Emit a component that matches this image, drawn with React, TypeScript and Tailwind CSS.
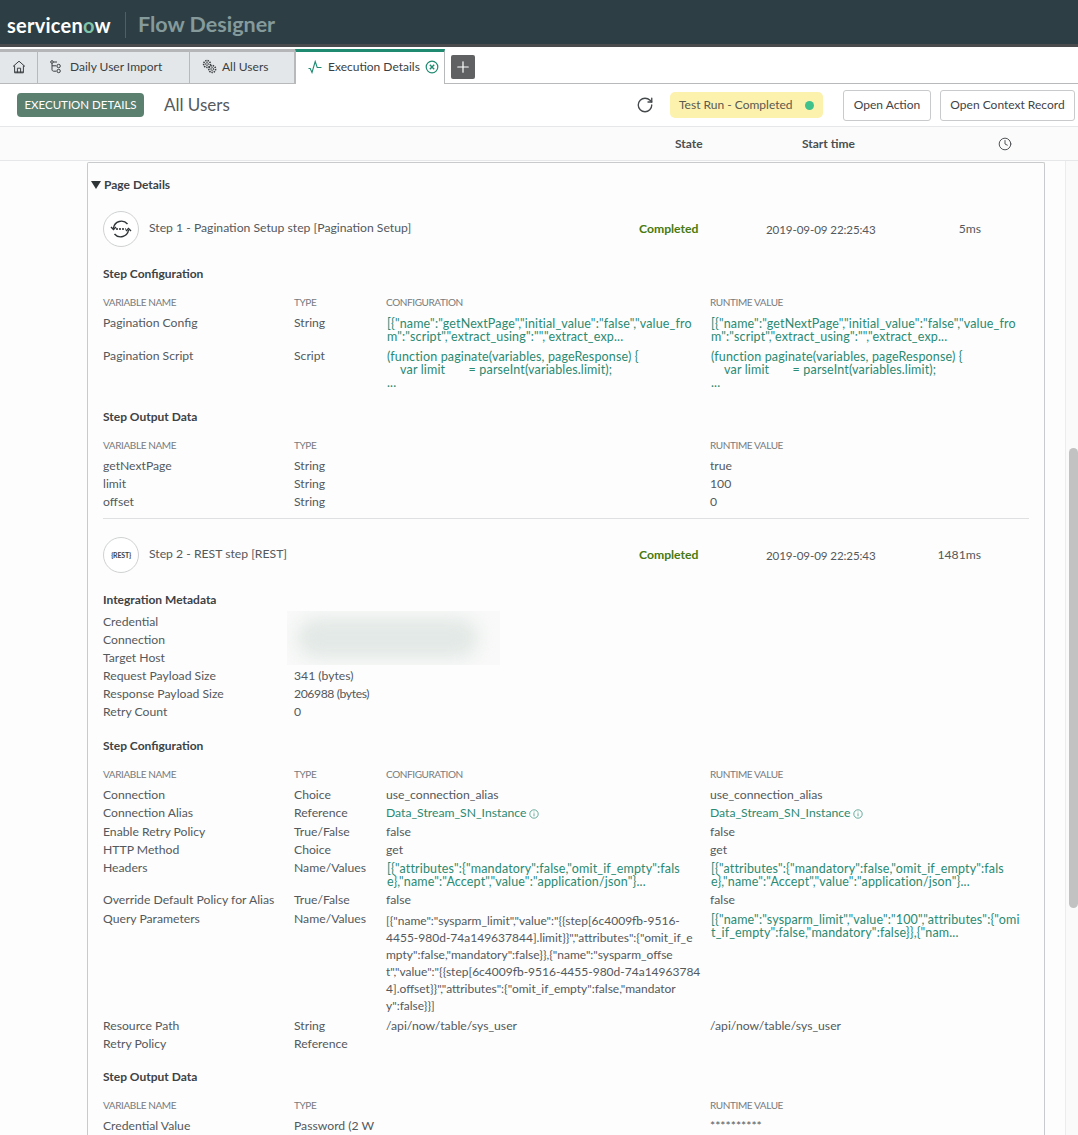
import { FC, ReactNode } from "react";
import { Clock, Plus, RotateCw } from "lucide-react";

const font = "font-['Lato','Noto_Sans',sans-serif]";

const configJson = `[{"name":"getNextPage","initial_value":"false","value_fro\nm":"script","extract_using":"","extract_exp...`;
const scriptText = `(function paginate(variables, pageResponse) {\n    var limit       = parseInt(variables.limit);\n...`;
const headersJson = `[{"attributes":{"mandatory":false,"omit_if_empty":fals\ne},"name":"Accept","value":"application/json"}...`;
const queryConfig = `[{"name":"sysparm_limit","value":"{{step[6c4009fb-9516-\n4455-980d-74a149637844].limit}}","attributes":{"omit_if_e\nmpty":false,"mandatory":false}},{"name":"sysparm_offse\nt","value":"{{step[6c4009fb-9516-4455-980d-74a14963784\n4].offset}}","attributes":{"omit_if_empty":false,"mandator\ny":false}}]`;
const queryRuntime = `[{"name":"sysparm_limit","value":"100","attributes":{"omi\nt_if_empty":false,"mandatory":false}},{"nam...`;

const Cols: FC<{ children: ReactNode; className?: string }> = ({ children, className }) => (
  <div className={`grid grid-cols-[191px_92px_324px_1fr] ${className ?? ""}`}>{children}</div>
);

const Heading: FC<{ children: ReactNode; className: string }> = ({ children, className }) => (
  <div className={`text-[12px] leading-[18px] font-bold text-[#3d4245] ${className}`}>{children}</div>
);

const HeadRow: FC<{ config?: boolean }> = ({ config }) => (
  <Cols className="mt-[10px] text-[10px] leading-[18px] tracking-[-0.4px] text-[#777b7e]">
    <div>VARIABLE NAME</div>
    <div>TYPE</div>
    <div>{config ? "CONFIGURATION" : ""}</div>
    <div>RUNTIME VALUE</div>
  </Cols>
);

const Row: FC<{ name: string; type?: ReactNode; config?: ReactNode; runtime?: ReactNode; className?: string }> = ({
  name,
  type,
  config,
  runtime,
  className,
}) => (
  <Cols className={`text-[12.2px] leading-[18px] text-[#54595c] ${className ?? ""}`}>
    <div>{name}</div>
    <div className="whitespace-pre">{type}</div>
    <div>{config}</div>
    <div>{runtime}</div>
  </Cols>
);

const Green: FC<{ text: string; pb?: string }> = ({ text, pb }) => (
  <div className={`whitespace-pre pl-px pt-[3px] text-[12.5px] leading-[13px] tracking-[0.15px] text-[#2a8a72] ${pb ?? "pb-[3px]"}`}>{text}</div>
);

const Info = () => (
  <svg width="10" height="10" viewBox="0 0 10 10" fill="none" stroke="#2a8a72" strokeWidth="0.7" className="ml-[3px] inline-block">
    <circle cx="5" cy="5" r="4.2" />
    <path d="M5 4.3v3M5 2.6v.8" />
  </svg>
);

const AliasLink = () => (
  <span className="text-[#2a8a72]">
    Data_Stream_SN_Instance
    <Info />
  </span>
);

const StepRow: FC<{ icon: ReactNode; title: string; duration: string; className: string }> = ({ icon, title, duration, className }) => (
  <div className={`flex items-center text-[12.2px] text-[#54595c] ${className}`}>
    <div className="flex h-9 w-9 shrink-0 items-center justify-center rounded-full border border-[#cfd1d2] bg-white">{icon}</div>
    <div className="ml-[10px] w-[490px] -translate-y-px">{title}</div>
    <div className="w-[127px] pt-px font-bold text-[#47790f]">Completed</div>
    <div className="w-[160px] pt-px text-[11.6px] tracking-[-0.1px]">2019-09-09 22:25:43</div>
    <div className="w-[55px] pt-px text-right">{duration}</div>
  </div>
);

const PaginationIcon = () => (
  <svg width="24" height="24" viewBox="0 0 24 24" fill="none" stroke="#2f3437" strokeWidth="1.4">
    <path d="M4.5 11a8 8 0 0 1 14-4" />
    <path d="M19.5 13a8 8 0 0 1-14 4" />
    <path d="M2 10l2.5 2.5L7 10M17 14l2.5-2.5L22 14" />
    <path d="M7.2 12h9.6" strokeWidth="2" strokeDasharray="1.6 1.4" />
  </svg>
);

const HomeIcon = () => (
  <svg width="14" height="14" viewBox="0 0 14 14" fill="none" stroke="#3a3f42" strokeWidth="1">
    <path d="M1 6.5L7 1.2l6 5.3M2.6 5.5v7.3h8.8V5.5" />
    <path d="M5.4 12.8V8.2h3.2v4.6" />
    <path d="M3 12h8" />
  </svg>
);

const FlowIcon = () => (
  <svg width="12" height="14" viewBox="0 0 12 14" fill="none" stroke="#3a3f42" strokeWidth="1">
    <circle cx="2" cy="2" r="1.3" />
    <path d="M2 3.4v6.2c0 1 .8 1.6 1.8 1.6h2.4M3.4 2H7M2 5.8h4.2" />
    <circle cx="8.6" cy="6" r="1.7" />
    <circle cx="8.6" cy="11" r="1.7" />
  </svg>
);

const GearsIcon = () => (
  <svg width="15" height="15" viewBox="0 0 15 15" fill="none" stroke="#3a3f42">
    <circle cx="5" cy="5" r="3.4" strokeWidth="1.6" strokeDasharray="1.4 0.9" />
    <circle cx="5" cy="5" r="1.4" strokeWidth="0.8" />
    <circle cx="10.2" cy="10" r="3.4" strokeWidth="1.6" strokeDasharray="1.4 0.9" />
    <circle cx="10.2" cy="10" r="1.4" strokeWidth="0.8" />
  </svg>
);

const PulseIcon = () => (
  <svg width="14" height="14" viewBox="0 0 14 14" fill="none" stroke="#1f8a70" strokeWidth="1.1">
    <path d="M0.5 8.5h1.7l1.8 4 3.2-11 2 6h4.3" />
  </svg>
);

const CloseIcon = () => (
  <svg width="14" height="14" viewBox="0 0 14 14" fill="none" stroke="#1f8a70" strokeWidth="1.2">
    <circle cx="7" cy="7" r="5.8" />
    <path d="M4.8 4.8l4.4 4.4M9.2 4.8l-4.4 4.4" strokeWidth="1.4" />
  </svg>
);

const Tab: FC<{ width: string; children: ReactNode }> = ({ width, children }) => (
  <div className={`flex h-[34px] items-center border-t-[3px] border-r border-t-[#b4b6b7] border-r-[#b7b9ba] bg-[#e4e7ea] pb-[2px] ${width}`}>{children}</div>
);

export default function App() {
  return (
    <div className={`flex h-[1135px] w-[1078px] flex-col overflow-hidden bg-[#fdfdfd] ${font}`}>
      {/* top bar */}
      <div className="flex h-[44px] shrink-0 items-center bg-[#2d3f44] pl-[7px] pt-[6px]">
        <span className="w-[118px] text-[20px] font-bold leading-none tracking-[0.25px] text-white">
          service<span>n</span>
          <span className="text-[#7fc4a8]">o</span>w
        </span>
        <div className="h-[26px] w-px bg-[#4f6065]" />
        <span className="ml-3 text-[21.5px] font-bold leading-none text-[#859a9b]">Flow Designer</span>
      </div>
      <div className="h-[3px] shrink-0 bg-[#4a4b4c]" />

      {/* tabs */}
      <div className="flex h-[37px] shrink-0 items-end border-b border-[#b7b9ba] bg-white">
        <Tab width="w-[38px] justify-center">
          <HomeIcon />
        </Tab>
        <Tab width="w-[152px] pl-3">
          <FlowIcon />
          <span className="ml-[8px] text-[12px] text-[#3a3f42]">Daily User Import</span>
        </Tab>
        <Tab width="w-[105px] pl-3">
          <GearsIcon />
          <span className="ml-[5px] text-[12px] text-[#3a3f42]">All Users</span>
        </Tab>
        <div className="-mb-px flex h-[35px] w-[150px] items-center border-x border-t-[3px] border-x-[#b7b9ba] border-t-[#1f8a70] bg-white pb-[2px] pl-[12px]">
          <PulseIcon />
          <span className="ml-[6px] text-[12px] text-[#3a3f42]">Execution Details</span>
          <span className="ml-[5px] flex">
            <CloseIcon />
          </span>
        </div>
        <div className="mb-[4px] ml-[6px] flex h-6 w-6 items-center justify-center rounded-[2px] bg-[#5f6162]">
          <Plus size={18} strokeWidth={1.6} color="#ffffff" />
        </div>
      </div>

      {/* toolbar */}
      <div className="flex h-[43px] shrink-0 items-center border-b border-[#e6e7e8] bg-white pl-[17px]">
        <div className="flex h-6 w-[127px] items-center justify-center rounded-[4px] bg-[#5b8070] text-[11.5px] text-white">EXECUTION DETAILS</div>
        <div className="ml-5 w-[472px] text-[17px] text-[#55595c]">All Users</div>
        <RotateCw size={18} strokeWidth={1.8} color="#45494c" />
        <div className="ml-[16px] flex h-[26px] w-[153px] items-center rounded-[5px] bg-[#fdf1ae] pl-[9px] text-[12px] text-[#5a5a4e]">
          Test Run - Completed
          <span className="ml-[12px] h-[9px] w-[9px] rounded-full bg-[#3fc28b]" />
        </div>
        <div className="ml-5 flex h-[31px] w-[88px] items-center justify-center rounded-[3px] border border-[#c9cacb] text-[12px] text-[#3f4447]">Open Action</div>
        <div className="ml-[9px] flex h-[31px] w-[135px] items-center justify-center rounded-[3px] border border-[#c9cacb] text-[12px] text-[#3f4447]">Open Context Record</div>
      </div>

      {/* column heads */}
      <div className="flex h-[34px] shrink-0 items-center border-b border-[#e6e7e8] bg-[#fbfbfb] pl-[675px] text-[12px] font-bold text-[#4a4f52]">
        <div className="w-[127px]">State</div>
        <div className="w-[196px]">Start time</div>
        <Clock size={14} strokeWidth={1.6} color="#45494c" />
      </div>

      <div className="flex min-h-0 flex-1">
        <div className="min-w-0 flex-1 pl-[87px] pt-px">
          <div className="w-[958px] rounded-t-[2px] border border-b-0 border-[#c8cacb] px-[15px]">
            <div className="mt-[13px] -ml-[12px] flex items-center text-[12px] font-bold leading-[18px] text-[#3d4245]">
              <span className="mr-[3px] h-0 w-0 border-x-[5px] border-t-[8px] border-x-transparent border-t-[#2f3437]" />
              Page Details
            </div>

            {/* step 1 */}
            <StepRow className="mt-[17px]" icon={<PaginationIcon />} title="Step 1 - Pagination Setup step [Pagination Setup]" duration="5ms" />
            <Heading className="mt-[18px]">Step Configuration</Heading>
            <HeadRow config />
            <div className="mt-[3px]">
              <Row name="Pagination Config" type="String" config={<Green text={configJson} pb="pb-[4px]" />} runtime={<Green text={configJson} pb="pb-[4px]" />} />
              <Row name="Pagination Script" type="Script" config={<Green text={scriptText} />} runtime={<Green text={scriptText} />} />
            </div>
            <Heading className="mt-[16px]">Step Output Data</Heading>
            <HeadRow />
            <div className="mt-[3px]">
              <Row name="getNextPage" type="String" runtime="true" />
              <Row name="limit" type="String" runtime="100" />
              <Row name="offset" type="String" runtime="0" />
            </div>
            <div className="mt-[7px] h-px bg-[#dfe0e1]" />

            {/* step 2 */}
            <StepRow
              className="mt-[18px]"
              icon={<span className="text-[7px] font-bold tracking-[-0.2px] text-[#3d4245]">{"{REST}"}</span>}
              title="Step 2 - REST step [REST]"
              duration="1481ms"
            />
            <Heading className="mt-[18px]">Integration Metadata</Heading>
            <div className="relative mt-[4px] text-[12px] leading-[18px] text-[#54595c]">
              <Row name="Credential" />
              <Row name="Connection" />
              <Row name="Target Host" />
              <Row name="Request Payload Size" type="341 (bytes)" />
              <Row name="Response Payload Size" type={<span className="tracking-[-0.4px]">206988 (bytes)</span>} />
              <Row name="Retry Count" type="0" />
              <div className="absolute left-[184px] top-[-2px] h-[54px] w-[213px] overflow-hidden bg-[#f8f9f8]">
                <div className="ml-[10px] mr-[22px] my-[7px] h-[40px] rounded-full bg-[#e3e9e6] blur-[8px]" />
              </div>
            </div>
            <Heading className="mt-[16px]">Step Configuration</Heading>
            <HeadRow config />
            <div className="mt-[3px]">
              <Row name="Connection" type="Choice" config="use_connection_alias" runtime="use_connection_alias" />
              <Row name="Connection Alias" type="Reference" config={<AliasLink />} runtime={<AliasLink />} className="pb-px" />
              <Row name="Enable Retry Policy" type="True/False" config="false" runtime="false" />
              <Row name="HTTP Method" type="Choice" config="get" runtime="get" />
              <Row name="Headers" type="Name/Values" config={<Green text={headersJson} />} runtime={<Green text={headersJson} />} />
              <Row name="Override Default Policy for Alias" type="True/False" config="false" runtime="false" className="pb-px" />
              <Row
                name="Query Parameters"
                type="Name/Values"
                config={<div className="whitespace-pre pb-[3px] pt-[2px] text-[12px] leading-[17px]">{queryConfig}</div>}
                runtime={<Green text={queryRuntime} />}
              />
              <Row name="Resource Path" type="String" config="/api/now/table/sys_user" runtime="/api/now/table/sys_user" />
              <Row name="Retry Policy" type="Reference" />
            </div>
            <Heading className="mt-[15px]">Step Output Data</Heading>
            <HeadRow />
            <div className="mt-[3px]">
              <Row name="Credential Value" type={"Password (2 W\nay Encrypted)"} runtime="**********" />
            </div>
          </div>
        </div>

        {/* scrollbar */}
        <div className="w-[13px] shrink-0 border-l border-[#ececec] bg-[#fafafa] pl-[3px] pt-[287px]">
          <div className="h-[460px] w-[9px] rounded-full bg-[#c2c2c2]" />
        </div>
      </div>
    </div>
  );
}
